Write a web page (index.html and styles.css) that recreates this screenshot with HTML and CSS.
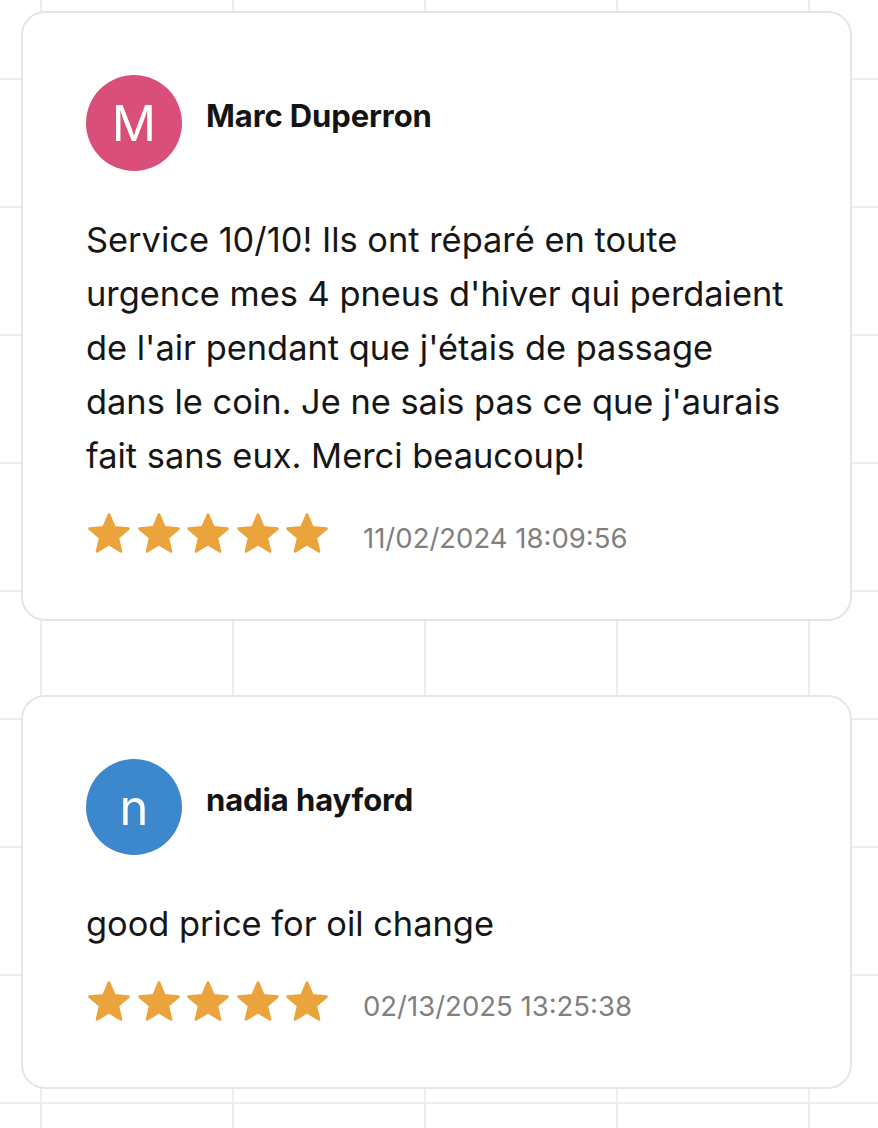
FILE: index.html
```html
<!DOCTYPE html>
<html lang="fr">
<head>
<meta charset="utf-8">
<title>Avis</title>
<link rel="stylesheet" href="styles.css">
</head>
<body>
<main class="reviews">
  <article class="card">
    <header class="card-head">
      <div class="avatar avatar-pink">M</div>
      <div class="name">Marc Duperron</div>
    </header>
    <p class="text">Service 10/10! Ils ont réparé en toute urgence mes 4 pneus d'hiver qui perdaient de l'air pendant que j'étais de passage dans le coin. Je ne sais pas ce que j'aurais fait sans eux. Merci beaucoup!</p>
    <div class="meta">
      <div class="stars">
        <svg class="star" viewBox="1.2 1.2 21.6 20.6"><path d="M12 17.27L18.18 21l-1.64-7.03L22 9.24l-7.19-.61L12 2 9.19 8.63 2 9.24l5.46 4.73L5.82 21z"/></svg>
        <svg class="star" viewBox="1.2 1.2 21.6 20.6"><path d="M12 17.27L18.18 21l-1.64-7.03L22 9.24l-7.19-.61L12 2 9.19 8.63 2 9.24l5.46 4.73L5.82 21z"/></svg>
        <svg class="star" viewBox="1.2 1.2 21.6 20.6"><path d="M12 17.27L18.18 21l-1.64-7.03L22 9.24l-7.19-.61L12 2 9.19 8.63 2 9.24l5.46 4.73L5.82 21z"/></svg>
        <svg class="star" viewBox="1.2 1.2 21.6 20.6"><path d="M12 17.27L18.18 21l-1.64-7.03L22 9.24l-7.19-.61L12 2 9.19 8.63 2 9.24l5.46 4.73L5.82 21z"/></svg>
        <svg class="star" viewBox="1.2 1.2 21.6 20.6"><path d="M12 17.27L18.18 21l-1.64-7.03L22 9.24l-7.19-.61L12 2 9.19 8.63 2 9.24l5.46 4.73L5.82 21z"/></svg>
      </div>
      <span class="date">11/02/2024 18:09:56</span>
    </div>
  </article>

  <article class="card">
    <header class="card-head">
      <div class="avatar avatar-blue">n</div>
      <div class="name">nadia hayford</div>
    </header>
    <p class="text">good price for oil change</p>
    <div class="meta">
      <div class="stars">
        <svg class="star" viewBox="1.2 1.2 21.6 20.6"><path d="M12 17.27L18.18 21l-1.64-7.03L22 9.24l-7.19-.61L12 2 9.19 8.63 2 9.24l5.46 4.73L5.82 21z"/></svg>
        <svg class="star" viewBox="1.2 1.2 21.6 20.6"><path d="M12 17.27L18.18 21l-1.64-7.03L22 9.24l-7.19-.61L12 2 9.19 8.63 2 9.24l5.46 4.73L5.82 21z"/></svg>
        <svg class="star" viewBox="1.2 1.2 21.6 20.6"><path d="M12 17.27L18.18 21l-1.64-7.03L22 9.24l-7.19-.61L12 2 9.19 8.63 2 9.24l5.46 4.73L5.82 21z"/></svg>
        <svg class="star" viewBox="1.2 1.2 21.6 20.6"><path d="M12 17.27L18.18 21l-1.64-7.03L22 9.24l-7.19-.61L12 2 9.19 8.63 2 9.24l5.46 4.73L5.82 21z"/></svg>
        <svg class="star" viewBox="1.2 1.2 21.6 20.6"><path d="M12 17.27L18.18 21l-1.64-7.03L22 9.24l-7.19-.61L12 2 9.19 8.63 2 9.24l5.46 4.73L5.82 21z"/></svg>
      </div>
      <span class="date">02/13/2025 13:25:38</span>
    </div>
  </article>
</main>
</body>
</html>
```

FILE: styles.css
```css
html, body {
  margin: 0;
  padding: 0;
}

body {
  width: 878px;
  height: 1128px;
  overflow: hidden;
  font-family: Inter, "Liberation Sans", sans-serif;
  color: #161616;
  background-color: #ffffff;
  background-image:
    linear-gradient(to right, #ededed 2px, transparent 2px),
    linear-gradient(to bottom, #ededed 2px, transparent 2px);
  background-size: 192px 128px, 192px 128px;
  background-position: 40px 0, 0 78px;
}

.reviews {
  display: flex;
  flex-direction: column;
  gap: 74px;
  padding: 11px 0 0 21px;
}

.card {
  box-sizing: border-box;
  width: 831px;
  padding: 62px 62px 66px 63px;
  border: 2px solid #e6e6ea;
  border-radius: 24px;
  background-color: #ffffff;
  background-image: radial-gradient(circle, #fafafb 1px, transparent 1.2px);
  background-size: 12px 12px;
}

.card-head {
  display: flex;
  align-items: flex-start;
  gap: 24px;
}

.avatar {
  width: 96px;
  height: 96px;
  border-radius: 50%;
  display: flex;
  align-items: center;
  justify-content: center;
  color: #ffffff;
  font-size: 49px;
  font-weight: 400;
  line-height: 1;
  flex: none;
}

.avatar-pink { background: #da4f79; }
.avatar-blue { background: #3d87cc; }

.name {
  margin-top: 23px;
  font-size: 31px;
  font-weight: 700;
  line-height: 36px;
  color: #141414;
  letter-spacing: -0.1px;
}

.text {
  margin: 42px 0 0;
  font-size: 34.4px;
  line-height: 54px;
}

.meta {
  display: flex;
  align-items: center;
  gap: 35px;
  margin-top: 30px;
}

.stars {
  display: flex;
  gap: 7.5px;
  margin-left: 2px;
}

.star {
  width: 42px;
  height: 40px;
  display: block;
}

.star path {
  fill: #eba33c;
  stroke: #eba33c;
  stroke-width: 1.4;
  stroke-linejoin: round;
}

.date {
  margin-top: 10px;
  font-size: 27.5px;
  line-height: 30px;
  color: #808080;
}
```
